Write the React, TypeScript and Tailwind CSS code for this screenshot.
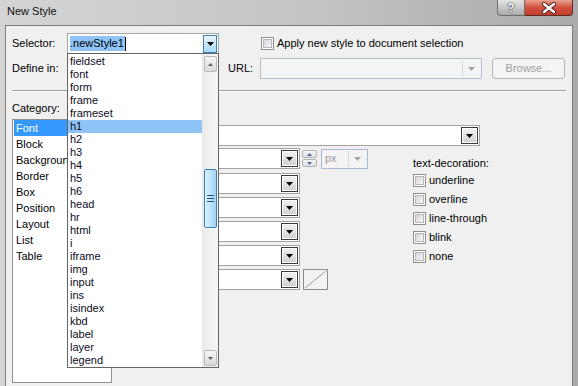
import React from 'react';

const TAGS = ['fieldset', 'font', 'form', 'frame', 'frameset', 'h1', 'h2', 'h3', 'h4', 'h5', 'h6', 'head', 'hr', 'html', 'i', 'iframe', 'img', 'input', 'ins', 'isindex', 'kbd', 'label', 'layer', 'legend'];
const CATEGORIES = ['Font', 'Block', 'Background', 'Border', 'Box', 'Position', 'Layout', 'List', 'Table'];
const DECORATIONS = ['underline', 'overline', 'line-through', 'blink', 'none'];
const ROWS = ['font-weight:', 'font-style:', 'font-variant:', 'text-transform:'];

function Tri({ color = '#000', w = 7, h = 4, up = false }: { color?: string; w?: number; h?: number; up?: boolean }) {
    return (
        <svg width={w} height={h} viewBox={`0 0 ${w} ${h}`} className="block">
            <path d={up ? `M0 ${h}L${w / 2} 0L${w} ${h}Z` : `M0 0L${w} 0L${w / 2} ${h}Z`} fill={color} />
        </svg>
    );
}

function DropBtn() {
    return (
        <div className="ml-auto mr-[1px] w-[17px] h-[17px] border border-[#3a3a3a] bg-linear-to-b from-[#f2f2f2] to-[#cfcfcf] shadow-[inset_0_0_0_1px_#ffffff] flex items-center justify-center">
            <Tri />
        </div>
    );
}

function Combo({ w }: { w: string }) {
    return (
        <div className={`${w} h-[21px] border border-[#a3a3a3] bg-white flex items-center`}>
            <DropBtn />
        </div>
    );
}

function Check({ className = '' }: { className?: string }) {
    return (
        <div className={`w-[13px] h-[13px] shrink-0 border border-[#8e8f8f] bg-white p-[1px] ${className}`}>
            <div className="w-full h-full border border-[#b4b8bd] bg-linear-to-br from-[#d3d5d8] to-[#f7f7f7]" />
        </div>
    );
}

function ScrollBtn({ up = false }: { up?: boolean }) {
    return (
        <div className="mx-[1px] h-[16px] rounded-[2px] border border-[#b9b9b9] bg-linear-to-b from-[#f6f6f6] to-[#dadada] flex items-center justify-center">
            <Tri up={up} w={5} h={3} color="#606060" />
        </div>
    );
}

export default function App() {
    return (
        <div className="relative w-[578px] h-[386px] overflow-hidden bg-linear-to-r from-[#d4d4d4] via-[#c6c6c6] to-[#aaaaaa] font-['Liberation_Sans',Arial,sans-serif] text-[11px] leading-[15px] text-black">
            {/* title bar */}
            <div className="h-[25px] flex items-start">
                <span className="ml-[7px] mt-[4px] text-[#111]">New Style</span>
                <div className="ml-auto mr-[5px] flex h-[16px]">
                    <div className="w-[28px] border border-t-0 border-[#6e6e6e] rounded-bl-[4px] bg-linear-to-b from-[#e4e4e4] via-[#c8c8c8] to-[#a9a9a9] flex items-center justify-center">
                        <span className="font-bold text-[12px] leading-[12px] text-white [text-shadow:0_0_1px_#333,0_0_1px_#333,0_0_1px_#333]">?</span>
                    </div>
                    <div className="w-[48px] border border-t-0 border-l-0 border-[#5e2a24] rounded-br-[4px] bg-linear-to-b from-[#e8a090] via-[#d0503c] to-[#c43d2c] flex items-center justify-center">
                        <svg width="16" height="12" viewBox="0 0 16 12">
                            <path d="M3 2L13 10M13 2L3 10" stroke="#4a2320" strokeWidth="4.2" strokeLinecap="round" />
                            <path d="M3 2L13 10M13 2L3 10" stroke="#ffffff" strokeWidth="2.4" strokeLinecap="round" />
                        </svg>
                    </div>
                </div>
            </div>

            {/* client area */}
            <div className="mx-[5px] h-[361px] border-x border-t border-[#7c7c7c] bg-[#f0f0f0]">
                {/* selector row */}
                <div className="flex items-center h-[21px] mt-[7px] pl-[6px]">
                    <span className="w-[55px]">Selector:</span>
                    <div className="w-[152px] h-[21px] border border-[#a7a7a7] bg-white flex items-center">
                        <span className="ml-[2px] h-[15px] leading-[15px] bg-[#8ec4f7] pr-[1px]">.newStyle1</span>
                        <span className="w-[1px] h-[14px] bg-black" />
                        <div className="ml-auto mr-[1px] w-[14px] h-[18px] border border-[#3c7fb1] bg-linear-to-b from-[#e8f5fd] to-[#a9daf6] flex items-center justify-center">
                            <Tri />
                        </div>
                    </div>
                    <Check className="ml-[42px]" />
                    <span className="ml-[3px]">Apply new style to document selection</span>
                </div>

                {/* define in / url row */}
                <div className="flex items-center h-[21px] mt-[4px] pl-[6px]">
                    <span className="w-[216px]">Define in:</span>
                    <span className="w-[32px]">URL:</span>
                    <div className="w-[222px] h-[21px] border border-[#b3c0d2] bg-[#f4f4f4] flex justify-end p-[1px]">
                        <div className="w-[18px] border-l border-[#d7dde5] flex items-center justify-center">
                            <Tri color="#a6a6a6" />
                        </div>
                    </div>
                    <div className="ml-[10px] w-[73px] h-[21px] rounded-[3px] border border-[#b5b5b5] bg-[#f4f4f4] flex items-center justify-center text-[#a0a0a0]">Browse...</div>
                </div>

                <div className="mt-[11px] mx-[6px] border-t border-b border-t-[#a0a0a0] border-b-white" />

                {/* lower part */}
                <div className="flex pl-[6px]">
                    <div className="w-[100px]">
                        <div className="mt-[9px] h-[15px]">Category:</div>
                        <div className="mt-[3px] h-[264px] border border-[#8e8f8f] bg-white pl-[1px] pr-[1px]">
                            {CATEGORIES.map((c, i) => (
                                <div key={c} className={`h-[16px] leading-[16px] pl-[2px] ${i === 0 ? 'bg-[#3399ff] text-white' : ''}`}>
                                    {/* the open dropdown covers the list from x=67, so the label is cut there */}
                                    <span className="block max-w-[51px] overflow-hidden whitespace-nowrap">{c}</span>
                                </div>
                            ))}
                        </div>
                    </div>

                    <div className="ml-[6px]">
                        <div className="mt-[33px] flex items-center">
                            <span className="w-[72px]" />
                            <Combo w="w-[290px]" />
                        </div>
                        <div className="mt-[2px] flex">
                            <div className="w-[250px]">
                                <div className="flex items-center h-[21px]">
                                    <span className="w-[72px]" />
                                    <Combo w="w-[110px]" />
                                    <div className="ml-[2px] w-[15px] h-[17px] flex flex-col gap-[1px]">
                                        <div className="h-[8px] rounded-[2px] border border-[#b3b3b3] bg-linear-to-b from-[#f6f6f6] to-[#dedede] flex items-center justify-center">
                                            <Tri up w={5} h={3} color="#4a6fa5" />
                                        </div>
                                        <div className="h-[8px] rounded-[2px] border border-[#b3b3b3] bg-linear-to-b from-[#f6f6f6] to-[#dedede] flex items-center justify-center">
                                            <Tri w={5} h={3} color="#4a6fa5" />
                                        </div>
                                    </div>
                                    <div className="ml-[4px] w-[47px] h-[20px] border border-[#aabbd1] bg-[#f3f3f3] flex items-center p-[1px]">
                                        <span className="pl-[2px] text-[#9c9c9c]">px</span>
                                        <div className="ml-auto w-[18px] h-full border-l border-[#d6dbe2] flex items-center justify-center">
                                            <Tri color="#a6a6a6" />
                                        </div>
                                    </div>
                                </div>
                                {ROWS.map((r, i) => (
                                    <div key={r} className={`flex items-center h-[21px] ${i === 0 ? 'mt-[4px]' : 'mt-[3px]'}`}>
                                        <span className="w-[72px]" />
                                        <Combo w="w-[110px]" />
                                    </div>
                                ))}
                                <div className="flex items-center h-[21px] mt-[3px]">
                                    <span className="w-[72px]" />
                                    <Combo w="w-[110px]" />
                                    <div className="ml-[3px] w-[25px] h-[21px] border border-[#8b8b8b] bg-[#f2f2f2]">
                                        <svg width="23" height="19" viewBox="0 0 23 19" className="block">
                                            <path d="M1 18L22 1" stroke="#9a9a9a" strokeWidth="1" />
                                        </svg>
                                    </div>
                                </div>
                            </div>

                            <div className="ml-[45px]">
                                <div className="mt-[8px] h-[15px]">text-decoration:</div>
                                {DECORATIONS.map(d => (
                                    <div key={d} className="flex items-center h-[19px]">
                                        <Check />
                                        <span className="ml-[3px]">{d}</span>
                                    </div>
                                ))}
                            </div>
                        </div>
                    </div>
                </div>
            </div>

            {/* open selector dropdown */}
            <div className="absolute left-[67px] top-[53px] w-[152px] h-[315px] border border-[#646464] bg-white flex">
                <div className="w-[134px] pt-[1px]">
                    {TAGS.map(t => (
                        <div key={t} className={`h-[13px] leading-[13px] pl-[2px] text-[#0c0c26] ${t === 'h1' ? 'bg-[#8ec4f7]' : ''}`}>{t}</div>
                    ))}
                </div>
                <div className="w-[16px] border-l border-[#e6e6e6] bg-linear-to-r from-[#ebebeb] to-[#f6f6f6] flex flex-col">
                    <div className="mt-[2px]"><ScrollBtn up /></div>
                    <div className="h-[97px]" />
                    <div className="mx-[1px] h-[59px] rounded-[2px] border border-[#3c7fb1] bg-linear-to-r from-[#dcf0fc] via-[#bce3f9] to-[#a3d3f2] flex flex-col items-center justify-center gap-[2px]">
                        <div className="w-[7px] h-[1px] bg-[#2e4f7a]" />
                        <div className="w-[7px] h-[1px] bg-[#2e4f7a]" />
                        <div className="w-[7px] h-[1px] bg-[#2e4f7a]" />
                    </div>
                    <div className="flex-1" />
                    <div className="mb-[1px]"><ScrollBtn /></div>
                </div>
            </div>
        </div>
    );
}
